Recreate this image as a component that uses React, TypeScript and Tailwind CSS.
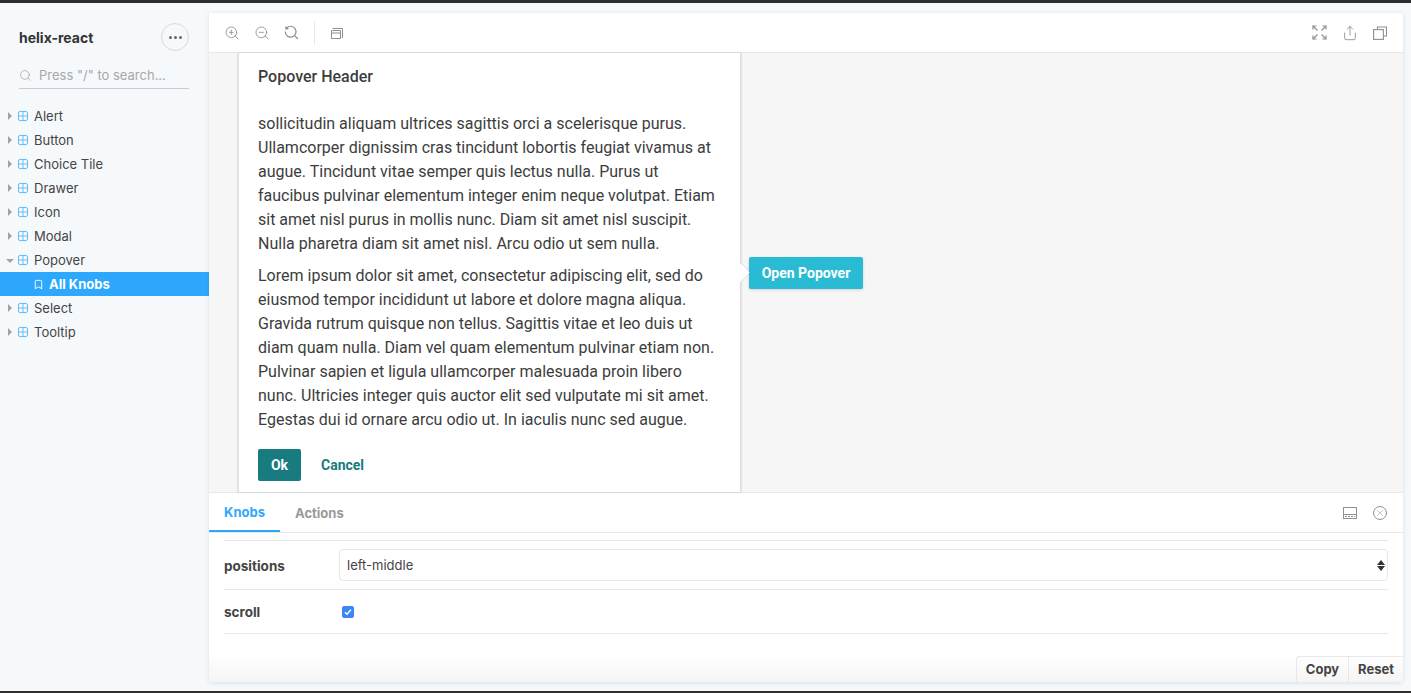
import React from 'react';
import { Bookmark, Search, Share, X, ZoomIn, ZoomOut } from 'lucide-react';

const stories = ['Alert', 'Button', 'Choice Tile', 'Drawer', 'Icon', 'Modal', 'Popover', 'All Knobs', 'Select', 'Tooltip'];

function ComponentIcon() {
  return (
    <svg width="10" height="10" viewBox="0 0 10 10" fill="none" stroke="#63bdfb" strokeWidth="1" className="shrink-0">
      <rect x="0.5" y="0.5" width="9" height="9" rx="1.5" />
      <path d="M5 .5v9M.5 5h9" />
    </svg>
  );
}

function TreeRow({ name }: { name: string }) {
  if (name === 'All Knobs') {
    return (
      <div className="h-6 flex items-center bg-[#2ea8fd] pl-[33px] text-white font-bold text-[13px]">
        <Bookmark size={11} strokeWidth={2} className="mr-[5px]" />
        <span className="mt-[2px]">{name}</span>
      </div>
    );
  }
  const open = name === 'Popover';
  return (
    <div className="h-6 flex items-center text-[13px] text-[#444]">
      <span className="w-[18px] flex justify-center pl-[2px] shrink-0">
        {open ? (
          <span className="mt-[1px] border-x-[4px] border-x-transparent border-t-[4px] border-t-[#a3a3a3]" />
        ) : (
          <span className="border-y-[4px] border-y-transparent border-l-[4px] border-l-[#a3a3a3]" />
        )}
      </span>
      <ComponentIcon />
      <span className="ml-[6px] mt-[2px]">{name}</span>
    </div>
  );
}

function Sidebar() {
  return (
    <aside className="w-[209px] shrink-0 flex flex-col">
      <div className="h-[50px] mt-[9px] pl-[19px] pr-5 flex items-center justify-between">
        <span className="text-[14px] font-bold text-[#333]">helix-react</span>
        <span className="w-7 h-7 rounded-full border border-[#d8dbde] flex items-center justify-center gap-[2px]">
          <i className="w-[3px] h-[3px] rounded-full bg-[#666]" />
          <i className="w-[3px] h-[3px] rounded-full bg-[#666]" />
          <i className="w-[3px] h-[3px] rounded-full bg-[#666]" />
        </span>
      </div>
      <div className="mx-[19px] mr-5 mt-[1px] h-[26px] border-b border-[#c9ccd0] flex items-center text-[13px] text-[#a5a8ab]">
        <Search size={13} strokeWidth={1.5} className="text-[#aaa] mr-[7px]" />
        <span>Press "/" to search...</span>
      </div>
      <nav className="mt-[15px]">
        {stories.map((s) => (
          <TreeRow key={s} name={s} />
        ))}
      </nav>
    </aside>
  );
}

function ResetZoomIcon() {
  return (
    <svg width="15" height="15" viewBox="0 0 15 15" fill="none" stroke="#8f8f8f" strokeWidth="1.2">
      <path d="M2.3 3.4A5.4 5.4 0 1 1 1.2 6.5M10.4 10.4l3.6 3.6M1.6 1.6l.5 2.4 2.4-.4" />
    </svg>
  );
}

function OutlineIcon() {
  return (
    <svg width="12" height="12" viewBox="0 0 12 12" fill="none" stroke="#8f8f8f" strokeWidth="1">
      <path d="M1.5 1.5h10v9.5M.5 3.5h9v8h-9zM.5 6h9" />
    </svg>
  );
}

function ExpandIcon() {
  return (
    <svg width="15" height="15" viewBox="0 0 15 15" fill="none" stroke="#8f8f8f" strokeWidth="1.2">
      <path d="M1 1l4.5 4.5M14 1L9.5 5.5M1 14l4.5-4.5M14 14L9.5 9.5" />
      <path d="M1 4.5V1h3.5M14 4.5V1h-3.5M1 10.5V14h3.5M14 10.5V14h-3.5" />
    </svg>
  );
}

function CopyIcon() {
  return (
    <svg width="14" height="14" viewBox="0 0 14 14" fill="none" stroke="#8f8f8f" strokeWidth="1.1">
      <path d="M4.5 3V1h9v9h-3" />
      <rect x="0.6" y="3.6" width="9.8" height="9.8" />
    </svg>
  );
}

function Toolbar() {
  return (
    <div className="h-10 shrink-0 flex items-center justify-between pl-[15px] pr-4 border-b border-[#e8e8e8]">
      <div className="flex items-center">
        <ZoomIn size={16} strokeWidth={1.3} className="text-[#8f8f8f]" />
        <ZoomOut size={16} strokeWidth={1.3} className="text-[#8f8f8f] ml-[14px]" />
        <span className="ml-[14px]"><ResetZoomIcon /></span>
        <span className="w-px h-6 bg-[#eaeaea] ml-[15px]" />
        <span className="ml-4"><OutlineIcon /></span>
      </div>
      <div className="flex items-center gap-[15px] text-[#8f8f8f]">
        <ExpandIcon />
        <Share size={16} strokeWidth={1.3} />
        <CopyIcon />
      </div>
    </div>
  );
}

function Canvas() {
  return (
    <div className="h-[439px] shrink-0 flex items-center bg-[#f6f6f6] pl-[29px]">
      <div className="relative w-[503px] h-full bg-white border-x border-[#dedede] shadow-[0_0_2px_rgba(0,0,0,0.2)] px-[19px] font-['Roboto',sans-serif] text-[#3d3d3d]">
        <h2 className="text-[16px] font-medium leading-6 mt-[12px]">Popover Header</h2>
        <p className="text-[16px] leading-6 mt-[23px] whitespace-nowrap">
          sollicitudin aliquam ultrices sagittis orci a scelerisque purus.<br />
          Ullamcorper dignissim cras tincidunt lobortis feugiat vivamus at<br />
          augue. Tincidunt vitae semper quis lectus nulla. Purus ut<br />
          faucibus pulvinar elementum integer enim neque volutpat. Etiam<br />
          sit amet nisl purus in mollis nunc. Diam sit amet nisl suscipit.<br />
          Nulla pharetra diam sit amet nisl. Arcu odio ut sem nulla.
        </p>
        <p className="text-[16px] leading-6 mt-2 whitespace-nowrap">
          Lorem ipsum dolor sit amet, consectetur adipiscing elit, sed do<br />
          eiusmod tempor incididunt ut labore et dolore magna aliqua.<br />
          Gravida rutrum quisque non tellus. Sagittis vitae et leo duis ut<br />
          diam quam nulla. Diam vel quam elementum pulvinar etiam non.<br />
          Pulvinar sapien et ligula ullamcorper malesuada proin libero<br />
          nunc. Ultricies integer quis auctor elit sed vulputate mi sit amet.<br />
          Egestas dui id ornare arcu odio ut. In iaculis nunc sed augue.
        </p>
        <div className="flex items-center mt-[17px]">
          <button className="w-[43px] h-8 rounded-[2px] bg-[#177b80] text-white text-[14px] font-bold">Ok</button>
          <button className="ml-5 text-[#177b80] text-[14px] font-bold">Cancel</button>
        </div>
        <span className="absolute right-[-7px] top-[213px] w-[13px] h-[13px] rotate-45 bg-white shadow-[1px_-1px_1px_rgba(0,0,0,0.08)]" />
      </div>
      <button className="ml-2 w-[114px] h-8 pt-[1px] rounded-[2px] bg-[#2abbd4] text-white text-[14px] font-bold font-['Roboto',sans-serif] shadow-[0_1px_3px_rgba(0,0,0,0.15)]">
        Open Popover
      </button>
    </div>
  );
}

function PanelIcon() {
  return (
    <svg width="14" height="12" viewBox="0 0 14 12" fill="none" stroke="#8f8f8f" strokeWidth="1">
      <rect x="0.5" y="0.5" width="13" height="11" />
      <path d="M.5 7.5h13" />
      <path d="M2 9.5h10" strokeDasharray="2 1" />
    </svg>
  );
}

function Addons() {
  return (
    <div className="flex-1 flex flex-col border-t border-[#e8e8e8] bg-gradient-to-b from-white from-85% to-[#f5f5f5] min-h-0">
      <div className="h-10 shrink-0 flex justify-between items-center border-b border-[#e8e8e8] pr-4">
        <div className="flex h-full text-[13px] font-bold">
          <span className="w-[71px] pt-[3px] flex items-center justify-center text-[#2ea8fd] border-b-2 border-[#2ea8fd]">Knobs</span>
          <span className="ml-[15px] pt-[2px] flex items-center text-[#999]">Actions</span>
        </div>
        <div className="flex items-center gap-4">
          <PanelIcon />
          <span className="w-[14px] h-[14px] rounded-full border border-[#8f8f8f] flex items-center justify-center text-[#8f8f8f]">
            <X size={10} strokeWidth={1.2} />
          </span>
        </div>
      </div>
      <div className="mx-[15px] mt-[7px] flex-1 text-[13px] text-[#444] relative">
        <div className="h-[50px] border-t border-b border-[#e8e8e8] flex items-center">
          <span className="w-[115px] mt-[2px] font-bold text-[13.5px]">positions</span>
          <div className="flex-1 h-8 rounded-[4px] border border-[#e8e8e8] flex items-center justify-between pl-[7px] pr-[2px]">
            <span className="mt-[2px]">left-middle</span>
            <span className="flex flex-col gap-[1px]">
              <i className="border-x-[4px] border-x-transparent border-b-[5px] border-b-[#333]" />
              <i className="border-x-[4px] border-x-transparent border-t-[5px] border-t-[#333]" />
            </span>
          </div>
        </div>
        <div className="h-[44px] border-b border-[#e8e8e8] flex items-center">
          <span className="w-[118px] mt-[2px] font-bold text-[13.5px]">scroll</span>
          <span className="w-3 h-3 rounded-[2px] bg-[#3d87f5] flex items-center justify-center">
            <svg width="8" height="8" viewBox="0 0 8 8" fill="none" stroke="#fff" strokeWidth="1.4">
              <path d="M1 4.2l2 2 4-4.6" />
            </svg>
          </span>
        </div>
      </div>
      <div className="h-[26px] shrink-0 flex justify-end text-[13px] font-bold text-[#444]">
        <span className="w-[52px] flex items-center justify-center border-t border-l border-[#e8e8e8] rounded-tl-[4px]">Copy</span>
        <span className="w-[55px] flex items-center justify-center border-t border-l border-[#e8e8e8]">Reset</span>
      </div>
    </div>
  );
}

export default function App() {
  return (
    <div className="w-[1411px] h-[693px] overflow-hidden flex flex-col bg-[#f6f9fc] font-['Inter',sans-serif]">
      <div className="h-[3px] shrink-0 bg-[#2e2e2e]" />
      <div className="flex-1 flex min-h-0">
        <Sidebar />
        <main className="w-[1194px] mt-[10px] mb-[9px] bg-white rounded-r-[4px] flex flex-col overflow-hidden shadow-[0_1px_5px_rgba(0,0,0,0.1)]">
          <Toolbar />
          <Canvas />
          <Addons />
        </main>
      </div>
      <div className="h-[2px] shrink-0 bg-[#2e2e2e]" />
    </div>
  );
}
